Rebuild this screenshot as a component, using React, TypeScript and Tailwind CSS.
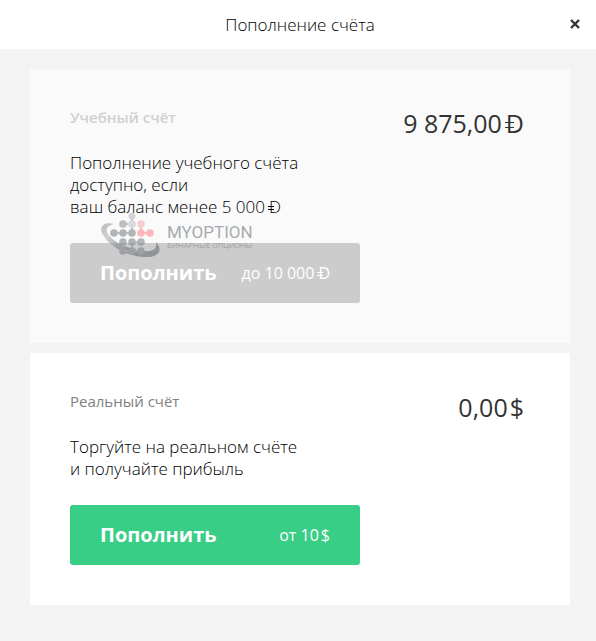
import React from 'react';

// Training currency: a D with two short bars across the stem
const DemoCurrency: React.FC = () => (
  <span className="relative ml-1 inline-block leading-none">
    D
    <span className="absolute -left-px top-[45%] h-px w-1/2 bg-current" />
    <span className="absolute -left-px top-[62%] h-px w-1/2 bg-current" />
  </span>
);

const Watermark: React.FC = () => (
  <div className="pointer-events-none absolute left-[71px] top-[143px] flex items-start gap-[6px] opacity-60">
    <svg width="60" height="46" viewBox="0 0 60 46" aria-hidden="true">
      <defs>
        <linearGradient id="swoosh" x1="0" y1="0" x2="1" y2="1">
          <stop offset="0" stopColor="#8f9498" />
          <stop offset="0.25" stopColor="#b4b8ba" />
          <stop offset="0.6" stopColor="#687077" />
          <stop offset="1" stopColor="#687077" />
        </linearGradient>
      </defs>
      <path
        d="M13 12C3 9-3 15 2 23c7 12 24 21 41 22 14 1 20-6 12-15 2 8-5 10-12 9C30 38 13 31 7 22c-3-5-1-8 6-10Z"
        fill="url(#swoosh)"
      />
      <path
        d="M31 4v18M22 12h9M13 21h18M31 30h9M22 39h18M22 30v9M31 30v9"
        fill="none"
        stroke="#969ba0"
        strokeWidth="2"
      />
      <g fill="#80878c">
        <circle cx="31" cy="4" r="3.5" fill="#b8babd" />
        <circle cx="22" cy="12" r="3.8" fill="#92979b" />
        <circle cx="31" cy="12" r="3.8" fill="#c2c4c6" />
        <circle cx="13" cy="21" r="3.8" />
        <circle cx="22" cy="21" r="3.8" />
        <circle cx="31" cy="21" r="3.8" />
        <circle cx="22" cy="30" r="3.8" />
        <circle cx="31" cy="30" r="3.8" />
        <circle cx="40" cy="30" r="3.8" />
        <circle cx="22" cy="39" r="3.8" />
        <circle cx="31" cy="39" r="3.8" />
        <circle cx="40" cy="39" r="3.8" />
      </g>
      <path d="M40 12v9h9" fill="none" stroke="#ff8b90" strokeWidth="2" />
      <circle cx="40" cy="12" r="3.8" fill="#efb0b3" />
      <circle cx="40" cy="21" r="3.8" fill="#ff8b90" />
      <circle cx="49" cy="21" r="3.8" fill="#ff8b90" />
    </svg>
    <div className="mt-[12px] font-['Roboto'] text-[#6f767e]">
      <div className="text-[17px] leading-[17px]">MYOPTION</div>
      <div className="text-[8px] font-light leading-[10px]">БИНАРНЫЕ ОПЦИОНЫ</div>
    </div>
  </div>
);

const App: React.FC = () => {
  return (
    <div className="min-h-screen bg-[#f3f3f3] font-['Open_Sans',sans-serif] text-[#333]">
      <header className="relative flex h-[49px] items-center justify-center bg-white pl-1">
        <h1 className="text-[17px] font-light leading-[22px] text-black">Пополнение счёта</h1>
        <button type="button" aria-label="Закрыть" className="absolute right-4 top-[19px]">
          <svg width="10" height="10" viewBox="0 0 10 10" aria-hidden="true">
            <path d="M1 1l8 8M9 1L1 9" stroke="#333" strokeWidth="2.4" />
          </svg>
        </button>
      </header>

      <main className="flex flex-col gap-[10px] py-5 pl-[30px] pr-[26px]">
        {/* Training account */}
        <section className="relative flex items-start justify-between bg-[#fafafa] p-10">
          <div>
            <h2 className="text-[15px] font-semibold leading-[16px] text-[#d0d0d0]">Учебный счёт</h2>
            <p className="mt-[27px] text-[17px] font-light leading-[22px] text-black">
              Пополнение учебного счёта
              <br />
              доступно, если
              <br />
              ваш баланс менее 5 000
              <DemoCurrency />
            </p>
            <button
              type="button"
              disabled
              className="mt-[25px] flex h-[60px] w-[290px] items-center justify-between rounded-[3px] bg-[#ccc] px-[30px] text-white"
            >
              <span className="text-[20px] font-bold">Пополнить</span>
              <span className="text-[16px]">
                до 10 000
                <DemoCurrency />
              </span>
            </button>
          </div>
          <div className="whitespace-nowrap pr-[6px] text-[25px] leading-[28px]">
            9 875,00
            <DemoCurrency />
          </div>
          <Watermark />
        </section>

        {/* Real account */}
        <section className="flex items-start justify-between bg-white p-10">
          <div>
            <h2 className="text-[15px] leading-[16px] text-[#808080]">Реальный счёт</h2>
            <p className="mt-[27px] text-[17px] font-light leading-[22px] text-black">
              Торгуйте на реальном счёте
              <br />и получайте прибыль
            </p>
            <button
              type="button"
              className="mt-[25px] flex h-[60px] w-[290px] items-center justify-between rounded-[3px] bg-[#38ce86] px-[30px] text-white"
            >
              <span className="text-[20px] font-bold">Пополнить</span>
              <span className="text-[16px]">
                от 10<span className="ml-[2px]">$</span>
              </span>
            </button>
          </div>
          <div className="whitespace-nowrap pr-[6px] text-[25px] leading-[28px]">
            0,00<span className="ml-[2px]">$</span>
          </div>
        </section>
      </main>
    </div>
  );
};

export default App;
